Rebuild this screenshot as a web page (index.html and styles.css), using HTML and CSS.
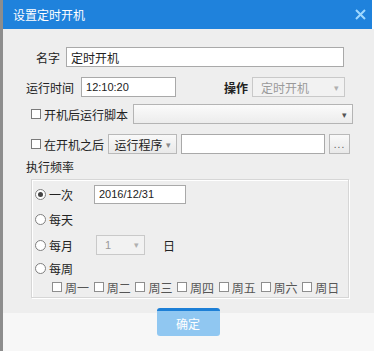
FILE: index.html
```html
<!DOCTYPE html>
<html lang="zh-CN">
<head>
  <meta charset="UTF-8">
  <title>设置定时开机</title>
  <link rel="stylesheet" href="styles.css">
</head>
<body>
  <div class="dialog">
    <!-- Title bar -->
    <div class="titlebar">
      <span class="title">设置定时开机</span>
      <svg class="close" width="11" height="11" viewBox="0 0 11 11">
        <path d="M1 1 L10 10 M10 1 L1 10" stroke="#9ed8ff" stroke-width="2" fill="none"/>
      </svg>
    </div>

    <div class="content">
      <div class="row row-name">
        <span class="label">名字</span>
        <input class="field name-field" type="text" value="定时开机">
      </div>

      <div class="row row-time">
        <span class="label">运行时间</span>
        <input class="field time-field" type="text" value="12:10:20">
        <span class="label op-label">操作</span>
        <div class="select disabled op-select">定时开机<span class="arrow">▾</span></div>
      </div>

      <div class="row row-script">
        <input type="checkbox" class="check">
        <span class="label">开机后运行脚本</span>
        <div class="select script-select"><span class="arrow dark">▾</span></div>
      </div>

      <div class="row row-after">
        <input type="checkbox" class="check">
        <span class="label">在开机之后</span>
        <div class="btn run-btn">运行程序<span class="arrow small">▾</span></div>
        <input class="field path-field" type="text">
        <div class="btn browse-btn">...</div>
      </div>

      <div class="section-title">执行频率</div>

      <!-- Frequency group -->
      <div class="group">
        <div class="g-row g-once">
          <input type="radio" name="freq" class="radio" checked>
          <span class="radio-label">一次</span>
          <input class="field date-field" type="text" value="2016/12/31">
        </div>
        <div class="g-row g-day">
          <input type="radio" name="freq" class="radio">
          <span class="radio-label">每天</span>
        </div>
        <div class="g-row g-month">
          <input type="radio" name="freq" class="radio">
          <span class="radio-label">每月</span>
          <div class="select disabled month-select">1<span class="arrow">▾</span></div>
          <span class="day-label">日</span>
        </div>
        <div class="g-row g-week">
          <input type="radio" name="freq" class="radio">
          <span class="radio-label">每周</span>
        </div>
        <div class="weekdays">
          <label class="weekday"><input type="checkbox" class="check light">周一</label>
          <label class="weekday"><input type="checkbox" class="check light">周二</label>
          <label class="weekday"><input type="checkbox" class="check light">周三</label>
          <label class="weekday"><input type="checkbox" class="check light">周四</label>
          <label class="weekday"><input type="checkbox" class="check light">周五</label>
          <label class="weekday"><input type="checkbox" class="check light">周六</label>
          <label class="weekday"><input type="checkbox" class="check light">周日</label>
        </div>
      </div>
    </div>

    <div class="footer">
      <button class="ok-btn">确定</button>
    </div>
  </div>
</body>
</html>
```

FILE: styles.css
```css
body {
  margin: 0;
  background: #ffffff;
  font-family: "Noto Sans CJK SC", "Liberation Sans", sans-serif;
  font-size: 12px;
  color: #222;
}

.dialog {
  width: 374px;
  height: 351px;
  border-left: 3px solid #8d8d8d;
  box-sizing: border-box;
  display: flex;
  flex-direction: column;
}

/* Title bar */
.titlebar {
  height: 29px;
  margin-right: 2px;
  background: #1f82dc;
  display: flex;
  align-items: center;
  justify-content: space-between;
  padding: 0 6px 0 10px;
}

.title {
  color: #ffffff;
  font-size: 12px;
}

.content {
  background: #eeeeee;
  padding-top: 18px;
  height: 284px;
  box-sizing: border-box;
}

.row {
  display: flex;
  align-items: center;
  height: 20px;
}

.label {
  white-space: nowrap;
}

.field {
  height: 20px;
  box-sizing: border-box;
  border: 1px solid #a9a9a9;
  background: #ffffff;
  padding: 0 4px;
  font-family: "Noto Sans CJK SC", sans-serif;
  font-size: 12px;
  color: #222;
  outline: none;
}

.select {
  height: 20px;
  box-sizing: border-box;
  border: 1px solid #b4b4b4;
  background: linear-gradient(#fbfbfb, #ececec);
  display: flex;
  align-items: center;
  justify-content: space-between;
  padding: 0 5px 0 8px;
}

.select.disabled {
  color: #9a9a9a;
  background: #f2f2f2;
  border-color: #c9c9c9;
}

.arrow {
  font-size: 9px;
  color: #b0b0b0;
}

.arrow.dark {
  color: #555;
}

.arrow.small {
  margin-left: 3px;
  color: #888;
}

.btn {
  height: 20px;
  box-sizing: border-box;
  border: 1px solid #b9b9b9;
  background: linear-gradient(#f9f9f9, #e9e9e9);
  display: flex;
  align-items: center;
  justify-content: center;
}

/* Row 1 */
.row-name {
  padding-left: 33px;
}

.row-name .field {
  margin-left: 6px;
  width: 278px;
}

/* Row 2 */
.row-time {
  margin-top: 10px;
  padding-left: 23px;
}

.time-field {
  margin-left: 7px;
  width: 95px;
  font-family: "Liberation Sans", sans-serif;
  font-size: 11px;
}

.op-label {
  margin-left: 48px;
  font-weight: bold;
}

.op-select {
  margin-left: 4px;
  width: 93px;
}

/* Row 3 and 4 */
.row-script {
  margin-top: 7px;
  padding-left: 28px;
}

.row-after {
  margin-top: 10px;
  padding-left: 28px;
}

.check {
  appearance: none;
  margin: 0 3px 0 0;
  width: 10px;
  height: 10px;
  border: 1px solid #7a7a7a;
  background: #ffffff;
  box-sizing: border-box;
}

.check.light {
  border-color: #8e8e8e;
}

.script-select {
  margin-left: 5px;
  width: 220px;
  justify-content: flex-end;
}

.run-btn {
  margin-left: 4px;
  width: 69px;
}

.path-field {
  margin-left: 4px;
  width: 144px;
}

.browse-btn {
  margin-left: 4px;
  width: 21px;
  color: #555;
  font-family: "Liberation Sans", sans-serif;
  font-size: 10px;
  letter-spacing: 1px;
}

.section-title {
  margin-top: 5px;
  padding-left: 23px;
  height: 16px;
  line-height: 16px;
}

/* Frequency group */
.group {
  margin: 4px 0 0 28px;
  width: 318px;
  height: 119px;
  box-sizing: border-box;
  border: 1px solid #d6d6d6;
  box-shadow: inset 1px 1px 0 #ffffff, 1px 1px 0 #ffffff;
  padding: 4px 0 0 3px;
}

.g-row {
  display: flex;
  align-items: center;
  height: 20px;
}

.g-day {
  margin-top: 5px;
}

.g-month {
  margin-top: 6px;
}

.g-week {
  margin-top: 3px;
}

.radio {
  appearance: none;
  margin: 0;
  width: 11px;
  height: 11px;
  border: 1px solid #808080;
  border-radius: 50%;
  background: #ffffff;
  box-sizing: border-box;
  position: relative;
}

.radio:checked::after {
  content: "";
  position: absolute;
  left: 2px;
  top: 2px;
  width: 5px;
  height: 5px;
  border-radius: 50%;
  background: #444;
}

.radio-label {
  margin-left: 3px;
  width: 45px;
}

.date-field {
  width: 92px;
  height: 19px;
  font-family: "Liberation Sans", sans-serif;
  font-size: 11px;
}

.month-select {
  margin-left: 2px;
  width: 49px;
  font-family: "Liberation Sans", sans-serif;
  font-size: 11px;
}

.day-label {
  margin-left: 18px;
}

.weekdays {
  display: flex;
  gap: 4.7px;
  margin-top: 0;
  padding-left: 17px;
  height: 18px;
  align-items: center;
}

.weekday {
  display: flex;
  align-items: center;
  color: #555;
}

/* Footer */
.footer {
  flex: 1;
  background: #f7f7f7;
  display: flex;
  justify-content: center;
  margin-top: 0;
}

.ok-btn {
  margin-top: -5px;
  width: 63px;
  height: 28px;
  border: none;
  border-top: 3px solid #1d7fd6;
  border-radius: 3px;
  background: #90c7f1;
  color: #ffffff;
  font-family: "Noto Sans CJK SC", sans-serif;
  font-size: 12px;
  margin-left: -1px;
}
```
